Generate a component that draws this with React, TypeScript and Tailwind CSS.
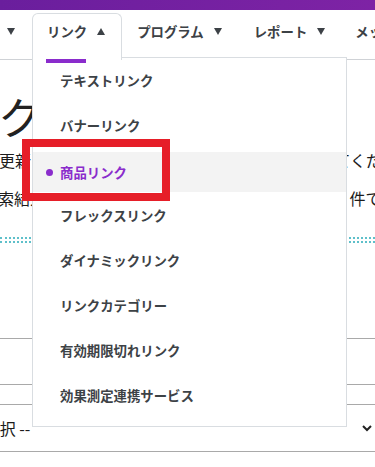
import React from "react";

const font = { fontFamily: '"Noto Sans CJK JP", "Noto Sans", sans-serif' };

function Down() {
  return (
    <svg width="8" height="7" viewBox="0 0 8 7" className="shrink-0">
      <polygon points="0,0 8,0 4,7" fill="#3c4146" />
    </svg>
  );
}

function Up() {
  return (
    <svg width="8" height="7" viewBox="0 0 8 7" className="shrink-0">
      <polygon points="0,7 8,7 4,0" fill="#3c4146" />
    </svg>
  );
}

const items = [
  "テキストリンク",
  "バナーリンク",
  "商品リンク",
  "フレックスリンク",
  "ダイナミックリンク",
  "リンクカテゴリー",
  "有効期限切れリンク",
  "効果測定連携サービス",
];

export default function App() {
  return (
    <div className="relative w-[375px] h-[467px] overflow-hidden bg-white" style={font}>
      {/* 上部バー */}
      <div className="h-[10px] bg-linear-to-r from-[#6a1e9d] to-[#7e23a5]" />

      {/* ナビ */}
      <nav className="flex items-end h-[50px] border-b border-[#cfd2d6] text-[13.4px] font-bold text-[#3c4146] whitespace-nowrap">
        <div className="flex items-center h-[46px] pb-[10px] pl-[7px] pr-[17px]">
          <Down />
        </div>
        <div className="relative z-20 flex items-center gap-[10px] h-[47px] -mb-px pb-[11px] pl-[14px] pr-[16px] bg-white border border-b-0 border-[#d9dde1] rounded-t-[6px]">
          <span>リンク</span>
          <Up />
          <span className="absolute left-[13px] bottom-[-3px] w-[40px] h-[4px] bg-[#8a2ccc]" />
        </div>
        <div className="flex items-center gap-[10px] h-[46px] pb-[10px] pl-[15px] pr-[16px]">
          <span>プログラム</span>
          <Down />
        </div>
        <div className="flex items-center gap-[10px] h-[46px] pb-[10px] pl-[16px] pr-[30px]">
          <span>レポート</span>
          <Down />
        </div>
        <div className="flex items-center h-[46px] pb-[10px]">
          <span>メッセージ</span>
        </div>
      </nav>

      {/* 本文 */}
      <div className="text-[#1c1c1c] whitespace-nowrap">
        <h1 className="mt-[31px] ml-[-178px] text-[44px] leading-[50px] font-normal text-[#222]">商品リンク</h1>
        <div className="text-[16px] leading-[38px]">
          <div className="ml-[-1px]">更新された商品情報を反映させるには再検索してください。</div>
          <div className="ml-[-2px]">索結果として表示される商品数は最大で１０００件です。</div>
        </div>
        <div className="mt-[20px] flex flex-col gap-[2px]">
          <div className="border-t-2 border-dotted border-[#5ec0ca]" />
          <div className="border-t-2 border-dotted border-[#5ec0ca]" />
        </div>
        <div className="mt-[95px] h-[47px] border-y border-[#a9a9a9]" />
        <div className="mt-[19px] h-[48px] border-y border-[#a9a9a9] flex items-center justify-between pr-[3px]">
          <span className="ml-[-31px] text-[16px]">-- 選択 --</span>
          <svg width="10" height="7" viewBox="0 0 10 7">
            <path d="M1 1l4 4 4-4" fill="none" stroke="#222" strokeWidth="2" />
          </svg>
        </div>
      </div>

      {/* ドロップダウン */}
      <div className="absolute z-10 left-[32px] top-[57px] w-[315px] pb-[8px] bg-white border border-[#d9dde1] text-[13.4px] font-bold text-[#3d4246]">
        {items.map((label) =>
          label === "商品リンク" ? (
            <div key={label} className="h-[45px] pt-[4px]">
              <div className="flex items-center h-[40px] pl-[13px] bg-[#f3f3f3] text-[#8a2ccc]">
                <span className="w-[7px] h-[7px] mr-[7px] rounded-full bg-[#8a2ccc]" />
                {label}
              </div>
            </div>
          ) : (
            <div key={label} className="flex items-center h-[45px] pl-[27px]">
              {label}
            </div>
          )
        )}
      </div>

      {/* 強調枠 */}
      <div className="absolute z-30 left-[22px] top-[139px] w-[148px] h-[62px] border-[8px] border-[#e61e28]" />
    </div>
  );
}
